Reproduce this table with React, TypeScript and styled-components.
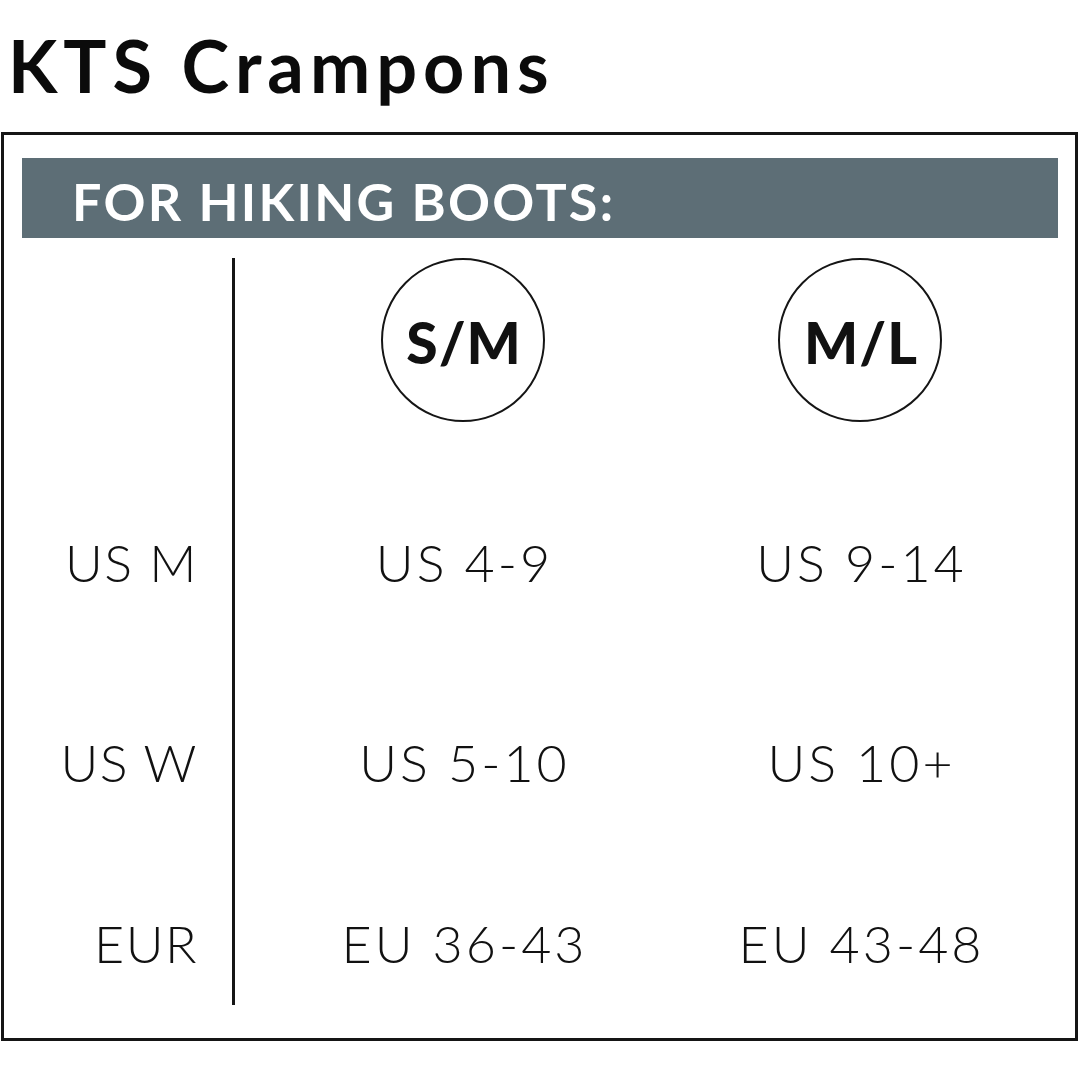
import React from "react";
import styled, { createGlobalStyle } from "styled-components";

const Global = createGlobalStyle`
  html, body { margin: 0; padding: 0; background: #ffffff; }
  body { font-family: "Lato", "Liberation Sans", sans-serif; color: #111; }
`;

const Page = styled.div`
  width: 1080px;
  height: 1080px;
  display: flex;
  flex-direction: column;
  box-sizing: border-box;
`;

const Title = styled.h1`
  margin: 30px 0 0 8px;
  font-family: "Lato", sans-serif;
  font-weight: 700;
  font-size: 72px;
  line-height: 70px;
  letter-spacing: 6px;
  height: 102px;
  color: #0b0b0b;
`;

const Frame = styled.section`
  margin-left: 1px;
  width: 1077px;
  height: 909px;
  box-sizing: border-box;
  border: 3px solid #151515;
  padding: 23px 17px 0 18px;
  display: flex;
  flex-direction: column;
`;

const Banner = styled.div`
  height: 80px;
  background: #5d6e76;
  display: flex;
  align-items: center;
  padding: 6px 0 0 50px;
  box-sizing: border-box;
  color: #ffffff;
  font-weight: 700;
  font-size: 52px;
  letter-spacing: 2.3px;
`;

const Table = styled.div`
  margin-top: 20px;
  display: grid;
  grid-template-columns: 210px 3px 456px 338px;
  grid-template-rows: 204px 200px 200px 162px;
`;

const Divider = styled.div`
  grid-column: 2;
  grid-row: 1 / span 4;
  align-self: start;
  width: 3px;
  height: 747px;
  background: #151515;
`;

const HeadCell = styled.div<{ $col: number }>`
  grid-column: ${(p) => p.$col};
  grid-row: 1;
  display: flex;
  justify-content: center;
  align-items: flex-start;
`;

const Circle = styled.div`
  width: 164px;
  height: 164px;
  box-sizing: border-box;
  border: 2px solid #151515;
  border-radius: 50%;
  display: flex;
  align-items: center;
  justify-content: center;
  font-weight: 900;
  font-size: 57px;
  padding: 4px 0 0 2px;
  letter-spacing: 1px;
`;

const Label = styled.div<{ $row: number }>`
  grid-column: 1;
  grid-row: ${(p) => p.$row};
  display: flex;
  align-items: center;
  justify-content: flex-end;
  padding-right: 34px;
  font-weight: 300;
  font-size: 52px;
  letter-spacing: 1.5px;
`;

const Value = styled.div<{ $row: number; $col: number }>`
  grid-column: ${(p) => p.$col};
  grid-row: ${(p) => p.$row};
  display: flex;
  align-items: center;
  justify-content: center;
  padding-left: 3px;
  font-weight: 300;
  font-size: 52px;
  letter-spacing: 3px;
`;

const rows = [
  { label: "US M", a: "US 4-9", b: "US 9-14" },
  { label: "US W", a: "US 5-10", b: "US 10+" },
  { label: "EUR", a: "EU 36-43", b: "EU 43-48" },
];

export default function App() {
  return (
    <Page>
      <Global />
      <Title>KTS Crampons</Title>
      <Frame>
        <Banner>FOR HIKING BOOTS:</Banner>
        <Table>
          <Divider />
          <HeadCell $col={3}>
            <Circle>S/M</Circle>
          </HeadCell>
          <HeadCell $col={4}>
            <Circle>M/L</Circle>
          </HeadCell>
          {rows.map((r, i) => (
            <React.Fragment key={r.label}>
              <Label $row={i + 2}>{r.label}</Label>
              <Value $row={i + 2} $col={3}>{r.a}</Value>
              <Value $row={i + 2} $col={4}>{r.b}</Value>
            </React.Fragment>
          ))}
        </Table>
      </Frame>
    </Page>
  );
}
